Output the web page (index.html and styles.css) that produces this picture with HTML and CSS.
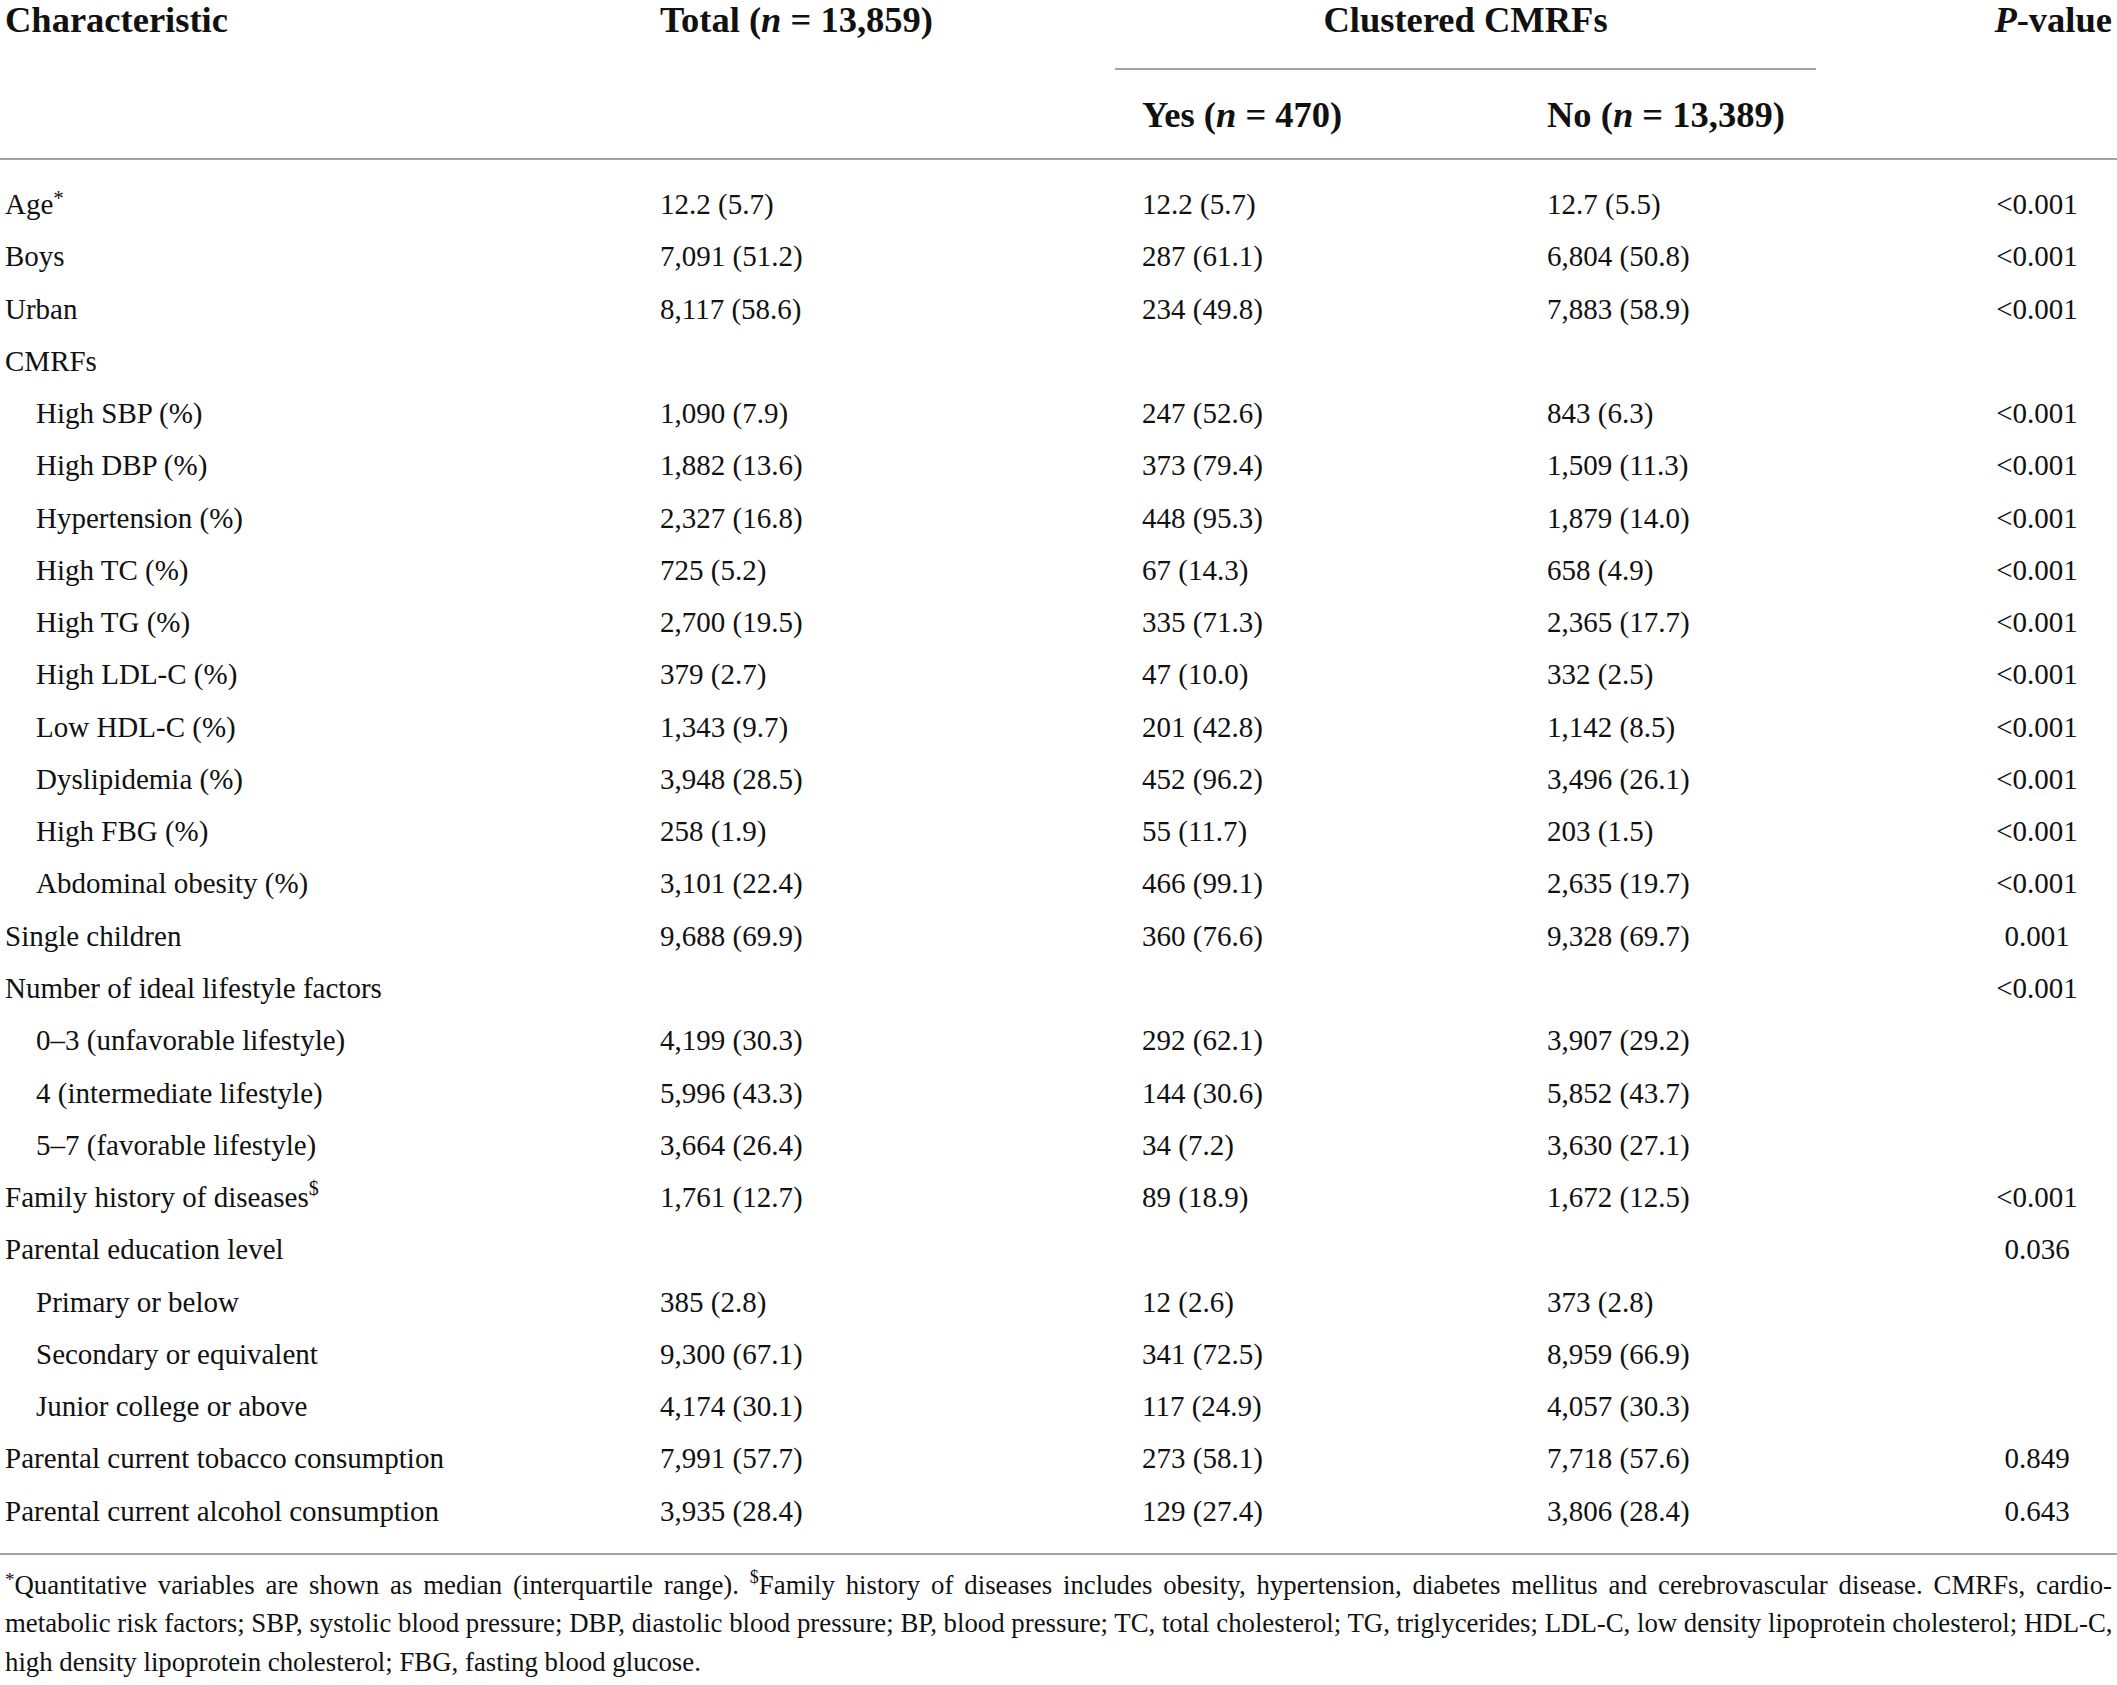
FILE: index.html
```html
<!DOCTYPE html>
<html lang="en">
<head>
<meta charset="utf-8">
<title>Characteristics table</title>
<link rel="stylesheet" href="styles.css">
</head>
<body>
<table class="tbl">
  <colgroup>
    <col class="c1"><col class="c2"><col class="c3"><col class="c4"><col class="c5">
  </colgroup>
  <thead>
    <tr class="h1">
      <th class="lab" rowspan="2">Characteristic</th>
      <th class="tot" rowspan="2">Total (<i>n</i> = 13,859)</th>
      <th class="grp" colspan="2"><div class="grp-in">Clustered CMRFs</div></th>
      <th class="pv" rowspan="2"><i>P</i>-value</th>
    </tr>
    <tr class="h2">
      <th class="sub">Yes (<i>n</i> = 470)</th>
      <th class="sub">No (<i>n</i> = 13,389)</th>
    </tr>
  </thead>
  <tbody>
    <tr class="first"><td class="lab">Age<sup class="star">*</sup></td><td class="v2">12.2 (5.7)</td><td class="v3">12.2 (5.7)</td><td class="v4">12.7 (5.5)</td><td class="p">&lt;0.001</td></tr>
    <tr><td class="lab">Boys</td><td class="v2">7,091 (51.2)</td><td class="v3">287 (61.1)</td><td class="v4">6,804 (50.8)</td><td class="p">&lt;0.001</td></tr>
    <tr><td class="lab">Urban</td><td class="v2">8,117 (58.6)</td><td class="v3">234 (49.8)</td><td class="v4">7,883 (58.9)</td><td class="p">&lt;0.001</td></tr>
    <tr><td class="lab">CMRFs</td><td class="v2"></td><td class="v3"></td><td class="v4"></td><td class="p"></td></tr>
    <tr><td class="lab ind">High SBP (%)</td><td class="v2">1,090 (7.9)</td><td class="v3">247 (52.6)</td><td class="v4">843 (6.3)</td><td class="p">&lt;0.001</td></tr>
    <tr><td class="lab ind">High DBP (%)</td><td class="v2">1,882 (13.6)</td><td class="v3">373 (79.4)</td><td class="v4">1,509 (11.3)</td><td class="p">&lt;0.001</td></tr>
    <tr><td class="lab ind">Hypertension (%)</td><td class="v2">2,327 (16.8)</td><td class="v3">448 (95.3)</td><td class="v4">1,879 (14.0)</td><td class="p">&lt;0.001</td></tr>
    <tr><td class="lab ind">High TC (%)</td><td class="v2">725 (5.2)</td><td class="v3">67 (14.3)</td><td class="v4">658 (4.9)</td><td class="p">&lt;0.001</td></tr>
    <tr><td class="lab ind">High TG (%)</td><td class="v2">2,700 (19.5)</td><td class="v3">335 (71.3)</td><td class="v4">2,365 (17.7)</td><td class="p">&lt;0.001</td></tr>
    <tr><td class="lab ind">High LDL-C (%)</td><td class="v2">379 (2.7)</td><td class="v3">47 (10.0)</td><td class="v4">332 (2.5)</td><td class="p">&lt;0.001</td></tr>
    <tr><td class="lab ind">Low HDL-C (%)</td><td class="v2">1,343 (9.7)</td><td class="v3">201 (42.8)</td><td class="v4">1,142 (8.5)</td><td class="p">&lt;0.001</td></tr>
    <tr><td class="lab ind">Dyslipidemia (%)</td><td class="v2">3,948 (28.5)</td><td class="v3">452 (96.2)</td><td class="v4">3,496 (26.1)</td><td class="p">&lt;0.001</td></tr>
    <tr><td class="lab ind">High FBG (%)</td><td class="v2">258 (1.9)</td><td class="v3">55 (11.7)</td><td class="v4">203 (1.5)</td><td class="p">&lt;0.001</td></tr>
    <tr><td class="lab ind">Abdominal obesity (%)</td><td class="v2">3,101 (22.4)</td><td class="v3">466 (99.1)</td><td class="v4">2,635 (19.7)</td><td class="p">&lt;0.001</td></tr>
    <tr><td class="lab">Single children</td><td class="v2">9,688 (69.9)</td><td class="v3">360 (76.6)</td><td class="v4">9,328 (69.7)</td><td class="p">0.001</td></tr>
    <tr><td class="lab">Number of ideal lifestyle factors</td><td class="v2"></td><td class="v3"></td><td class="v4"></td><td class="p">&lt;0.001</td></tr>
    <tr><td class="lab ind">0–3 (unfavorable lifestyle)</td><td class="v2">4,199 (30.3)</td><td class="v3">292 (62.1)</td><td class="v4">3,907 (29.2)</td><td class="p"></td></tr>
    <tr><td class="lab ind">4 (intermediate lifestyle)</td><td class="v2">5,996 (43.3)</td><td class="v3">144 (30.6)</td><td class="v4">5,852 (43.7)</td><td class="p"></td></tr>
    <tr><td class="lab ind">5–7 (favorable lifestyle)</td><td class="v2">3,664 (26.4)</td><td class="v3">34 (7.2)</td><td class="v4">3,630 (27.1)</td><td class="p"></td></tr>
    <tr><td class="lab">Family history of diseases<sup class="dol">$</sup></td><td class="v2">1,761 (12.7)</td><td class="v3">89 (18.9)</td><td class="v4">1,672 (12.5)</td><td class="p">&lt;0.001</td></tr>
    <tr><td class="lab">Parental education level</td><td class="v2"></td><td class="v3"></td><td class="v4"></td><td class="p">0.036</td></tr>
    <tr><td class="lab ind">Primary or below</td><td class="v2">385 (2.8)</td><td class="v3">12 (2.6)</td><td class="v4">373 (2.8)</td><td class="p"></td></tr>
    <tr><td class="lab ind">Secondary or equivalent</td><td class="v2">9,300 (67.1)</td><td class="v3">341 (72.5)</td><td class="v4">8,959 (66.9)</td><td class="p"></td></tr>
    <tr><td class="lab ind">Junior college or above</td><td class="v2">4,174 (30.1)</td><td class="v3">117 (24.9)</td><td class="v4">4,057 (30.3)</td><td class="p"></td></tr>
    <tr><td class="lab">Parental current tobacco consumption</td><td class="v2">7,991 (57.7)</td><td class="v3">273 (58.1)</td><td class="v4">7,718 (57.6)</td><td class="p">0.849</td></tr>
    <tr class="last"><td class="lab">Parental current alcohol consumption</td><td class="v2">3,935 (28.4)</td><td class="v3">129 (27.4)</td><td class="v4">3,806 (28.4)</td><td class="p">0.643</td></tr>
  </tbody>
</table>
<div class="notes">
  <span class="ln"><sup class="star">*</sup>Quantitative variables are shown as median (interquartile range). <sup class="dol">$</sup>Family history of diseases includes obesity, hypertension, diabetes mellitus and cerebrovascular disease. CMRFs, cardio-</span>
  <span class="ln">metabolic risk factors; SBP, systolic blood pressure; DBP, diastolic blood pressure; BP, blood pressure; TC, total cholesterol; TG, triglycerides; LDL-C, low density lipoprotein cholesterol; HDL-C,</span>
  <span class="ln lastln">high density lipoprotein cholesterol; FBG, fasting blood glucose.</span>
</div>
</body>
</html>
```
FILE: styles.css
```css
html, body {
  margin: 0;
  padding: 0;
  background: #ffffff;
}
body {
  width: 2117px;
  font-family: "Liberation Serif", "Times New Roman", serif;
  color: #111;
}
.tbl {
  width: 2117px;
  table-layout: fixed;
  border-collapse: collapse;
  border-spacing: 0;
}
.c1 { width: 655px; }
.c2 { width: 460px; }
.c3 { width: 405px; }
.c4 { width: 322px; }
.c5 { width: 275px; }

th, td {
  padding: 0;
  text-align: left;
  white-space: nowrap;
}
th {
  font-size: 36.5px;
  font-weight: bold;
  line-height: 40px;
}
.h1 th { vertical-align: top; }
.h1 .lab { padding-left: 5px; }
.h1 .tot { padding-left: 5px; }
.h1 .pv { text-align: right; padding-right: 5px; }
.grp-in {
  text-align: center;
  margin-right: 26px;
  padding-bottom: 28px;
  border-bottom: 2px solid #a3a3a3;
}
.h2 th {
  height: 86px;
  vertical-align: middle;
  padding-left: 27px;
  padding-top: 2px;
}
thead { border-bottom: 2px solid #a3a3a3; }

td {
  font-size: 29px;
  line-height: 52.27px;
  height: 52.27px;
  vertical-align: middle;
}
.lab { padding-left: 5px; }
.lab.ind { padding-left: 36px; }
.v2 { padding-left: 5px; }
.v3 { padding-left: 27px; }
.v4 { padding-left: 27px; }
.p { padding-left: 115px; text-align: center; }
.first td { padding-top: 18px; }
.last td { padding-bottom: 16px; }
tbody { border-bottom: 2px solid #a3a3a3; }

sup { line-height: 0; }
sup.star { font-size: 21px; vertical-align: 9px; }
sup.dol { font-size: 20px; vertical-align: 12px; }

.notes {
  padding: 11px 5px 0 5px;
  font-size: 26.8px;
  line-height: 38.5px;
  text-align: justify;
}
.notes sup.star { font-size: 19px; vertical-align: 8px; }
.notes sup.dol { font-size: 18px; vertical-align: 11px; }
.ln {
  display: block;
  white-space: nowrap;
  text-align-last: justify;
}
.ln.lastln { text-align-last: left; }
```
